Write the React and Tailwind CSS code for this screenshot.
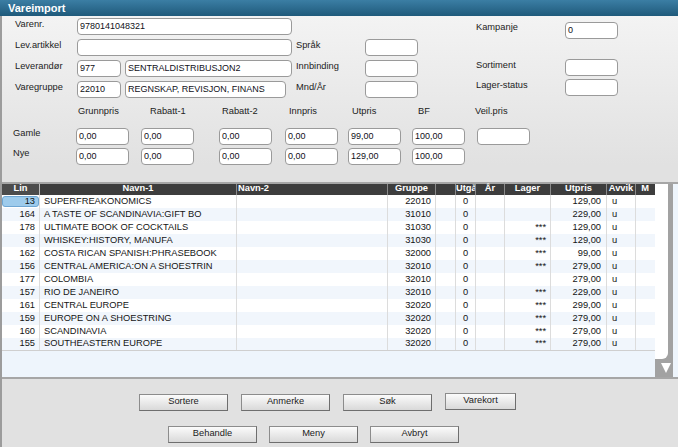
import React from "react";

const rows = [
  ["13", "SUPERFREAKONOMICS", "22010", "0", "", "129,00", "u"],
  ["164", "A TASTE OF SCANDINAVIA:GIFT BO", "31010", "0", "", "229,00", "u"],
  ["178", "ULTIMATE BOOK OF COCKTAILS", "31030", "0", "***", "129,00", "u"],
  ["83", "WHISKEY:HISTORY, MANUFA", "31030", "0", "***", "129,00", "u"],
  ["162", "COSTA RICAN SPANISH:PHRASEBOOK", "32000", "0", "***", "99,00", "u"],
  ["156", "CENTRAL AMERICA:ON A SHOESTRIN", "32010", "0", "***", "279,00", "u"],
  ["177", "COLOMBIA", "32010", "0", "", "279,00", "u"],
  ["157", "RIO DE JANEIRO", "32010", "0", "***", "229,00", "u"],
  ["161", "CENTRAL EUROPE", "32020", "0", "***", "299,00", "u"],
  ["159", "EUROPE ON A SHOESTRING", "32020", "0", "***", "279,00", "u"],
  ["160", "SCANDINAVIA", "32020", "0", "***", "279,00", "u"],
  ["155", "SOUTHEASTERN EUROPE", "32020", "0", "***", "279,00", "u"],
];

function Field({ w, value = "" }) {
  return (
    <div
      className={`${w} h-[17px] shrink-0 bg-white border border-[#9a9a9a] rounded-[4px] pl-[2px] flex items-center text-[9px] text-[#101020] overflow-hidden whitespace-nowrap`}
    >
      {value}
    </div>
  );
}

function Btn({ label, w = "w-[89px]" }) {
  return (
    <div
      className={`${w} h-[17px] shrink-0 border border-[#8c8c8c] border-b-[#6e6e6e] border-r-[#6e6e6e] bg-gradient-to-b from-[#fbfbfb] to-[#d9d9d9] flex items-center justify-center text-[#222] pb-[1px]`}
    >
      {label}
    </div>
  );
}

const priceCols = [
  { label: "Grunnpris", w: "w-[65px]", lp: "pl-[2px]", g: "0,00", n: "0,00" },
  { label: "Rabatt-1", w: "w-[78px]", lp: "pl-[9px]", g: "0,00", n: "0,00" },
  { label: "Rabatt-2", w: "w-[66px]", lp: "pl-[3px]", g: "0,00", n: "0,00" },
  { label: "Innpris", w: "w-[63px]", lp: "pl-[4px]", g: "0,00", n: "0,00" },
  { label: "Utpris", w: "w-[64px]", lp: "pl-[4px]", g: "99,00", n: "129,00" },
  { label: "BF", w: "w-[65px]", lp: "pl-[6px]", g: "100,00", n: "100,00" },
  { label: "Veil.pris", w: "w-[60px]", lp: "-ml-[2px]", g: "", n: null },
];

export default function App() {
  return (
    <div className="w-[678px] h-[447px] overflow-hidden bg-[#e1e1e1] font-['Liberation_Sans',Arial,sans-serif] text-[9.3px] text-[#222] leading-none">
      {/* title */}
      <div className="h-[16px] bg-gradient-to-b from-[#3b7ea4] to-[#1f5a7b] flex items-center pl-[8px] text-white font-bold text-[11px]">
        Vareimport
      </div>

      <div className="h-[431px] border-l-2 border-[#9c9c9c] flex flex-col">
        {/* top form */}
        <div className="bg-gradient-to-b from-[#f3f3f3] to-[#e1e1e1] pl-[13px] pt-[2px]">
          <div className="flex">
            <div className="flex flex-col gap-[4px]">
              <div className="flex items-center h-[17px]">
                <div className="w-[62px] pb-[4px]">Varenr.</div>
                <Field w="w-[215px]" value="9780141048321" />
              </div>
              <div className="flex items-center h-[17px]">
                <div className="w-[62px] pb-[4px]">Lev.artikkel</div>
                <Field w="w-[215px]" />
                <div className="w-[73px] pl-[4px] pb-[4px]">Språk</div>
                <Field w="w-[53px]" />
              </div>
              <div className="flex items-center h-[17px]">
                <div className="w-[62px] pb-[4px]">Leverandør</div>
                <Field w="w-[44px]" value="977" />
                <div className="w-[4px]" />
                <Field w="w-[167px]" value="SENTRALDISTRIBUSJON2" />
                <div className="w-[73px] pl-[4px] pb-[4px]">Innbinding</div>
                <Field w="w-[53px]" />
              </div>
              <div className="flex items-center h-[17px]">
                <div className="w-[62px] pb-[4px]">Varegruppe</div>
                <Field w="w-[44px]" value="22010" />
                <div className="w-[4px]" />
                <Field w="w-[161px]" value="REGNSKAP, REVISJON, FINANS" />
                <div className="w-[6px]" />
                <div className="w-[73px] pl-[4px] pb-[4px]">Mnd/År</div>
                <Field w="w-[53px]" />
              </div>
            </div>
            <div className="ml-[58px] mt-[4px] flex flex-col">
              <div className="flex items-center h-[17px]">
                <div className="w-[89px] pb-[6px]">Kampanje</div>
                <Field w="w-[53px]" value="0" />
              </div>
              <div className="flex items-center h-[17px] mt-[20px]">
                <div className="w-[89px] pb-[4px]">Sortiment</div>
                <Field w="w-[53px]" />
              </div>
              <div className="flex items-center h-[17px] mt-[3px]">
                <div className="w-[89px] pb-[4px]">Lager-status</div>
                <Field w="w-[53px]" />
              </div>
            </div>
          </div>

          {/* prices */}
          <div className="flex mt-[7px]">
            <div className="w-[63px] -ml-[2px] flex flex-col">
              <div className="h-[12px]" />
              <div className="h-[17px] mt-[11px] flex items-center pb-[5px]">Gamle</div>
              <div className="h-[17px] mt-[3px] flex items-center pb-[5px]">Nye</div>
            </div>
            {priceCols.map((c) => (
              <div key={c.label} className={`${c.w} flex flex-col shrink-0`}>
                <div className={`h-[12px] pt-[2px] flex items-center ${c.lp}`}>{c.label}</div>
                <div className="mt-[11px]">
                  <Field w="w-[53px]" value={c.g} />
                </div>
                {c.n !== null && (
                  <div className="mt-[3px]">
                    <Field w="w-[53px]" value={c.n} />
                  </div>
                )}
              </div>
            ))}
          </div>
        </div>

        {/* table */}
        <div className="mt-[17px] h-[197px] border-t-2 border-b-2 border-[#a6a6a6] flex bg-[#eef5fc]">
          <div className="w-[653px] flex flex-col">
            <div className="h-[11px] bg-[#3d3d3d] text-white font-bold flex">
              <div className="w-[38px] text-center bg-[#4c4c4c] border-r border-[#bdbdbd]">Lin</div>
              <div className="w-[197px] text-center border-r border-[#8a8a8a]">Navn-1</div>
              <div className="w-[151px] pl-[1px] border-r border-[#8a8a8a]">Navn-2</div>
              <div className="w-[48px] text-center border-r border-[#8a8a8a]">Gruppe</div>
              <div className="w-[20px] border-r border-[#8a8a8a]" />
              <div className="w-[20px] overflow-hidden whitespace-nowrap border-r border-[#8a8a8a]">Utgå</div>
              <div className="w-[29px] text-center border-r border-[#8a8a8a]">År</div>
              <div className="w-[46px] text-center border-r border-[#8a8a8a]">Lager</div>
              <div className="w-[56px] text-center border-r border-[#8a8a8a]">Utpris</div>
              <div className="w-[29px] text-center border-r border-[#8a8a8a]">Avvik</div>
              <div className="w-[18px] text-center">M</div>
            </div>
            {rows.map((r, i) => (
              <div
                key={r[0]}
                className={`h-[13px] flex items-center text-[#141414] ${i % 2 ? "bg-[#f1f6fc]" : "bg-white"} ${i === rows.length - 1 ? "border-b border-[#cfcfcf]" : ""}`}
              >
                <div className="w-[38px] h-full flex items-center justify-end pr-[4px] border-r border-[#dcdcdc]">
                  {i === 0 ? (
                    <div className="w-[37px] h-[11px] -mr-[4px] pr-[3px] flex items-center justify-end rounded-[3px] bg-[#9dcbec] border border-[#6ea6d3]">
                      {r[0]}
                    </div>
                  ) : (
                    r[0]
                  )}
                </div>
                <div className="w-[197px] h-full flex items-center pl-[4px] border-r border-[#dcdcdc] overflow-hidden whitespace-nowrap">{r[1]}</div>
                <div className="w-[151px] h-full border-r border-[#dcdcdc]" />
                <div className="w-[48px] h-full flex items-center justify-end pr-[4px] border-r border-[#dcdcdc]">{r[2]}</div>
                <div className="w-[20px] h-full border-r border-[#dcdcdc]" />
                <div className="w-[20px] h-full flex items-center justify-center border-r border-[#dcdcdc]">{r[3]}</div>
                <div className="w-[29px] h-full border-r border-[#dcdcdc]" />
                <div className="w-[46px] h-full flex items-center justify-end pr-[4px] border-r border-[#dcdcdc]">{r[4]}</div>
                <div className="w-[56px] h-full flex items-center justify-end pr-[5px] border-r border-[#dcdcdc]">{r[5]}</div>
                <div className="w-[29px] h-full flex items-center pl-[5px] border-r border-[#dcdcdc]">{r[6]}</div>
                <div className="w-[18px] h-full" />
              </div>
            ))}
          </div>
          {/* scrollbar */}
          <div className="w-[18px] flex flex-col bg-[#a2a2a2]">
            <div className="flex-1 bg-white rounded-br-[6px] mr-[5px]" />
            <div className="h-[18px] flex items-center justify-end pr-[2px]">
              <svg width="10" height="12" viewBox="0 0 10 12">
                <path d="M0 1 L10 1 L5 11 Z" fill="#ffffff" />
              </svg>
            </div>
          </div>
        </div>

        {/* buttons */}
        <div className="flex gap-[13px] ml-[137px] mt-[14px] items-start">
          <div className="mt-[1px]"><Btn label="Sortere" /></div>
          <div className="mt-[1px]"><Btn label="Anmerke" /></div>
          <div className="mt-[1px]"><Btn label="Søk" /></div>
          <Btn label="Varekort" w="w-[71px]" />
        </div>
        <div className="flex gap-[12px] ml-[166px] mt-[15px]">
          <Btn label="Behandle" />
          <Btn label="Meny" />
          <Btn label="Avbryt" />
        </div>
      </div>
    </div>
  );
}
